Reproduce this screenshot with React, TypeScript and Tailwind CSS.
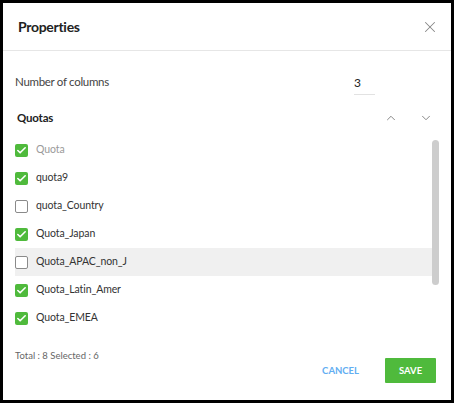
import { X, ChevronUp, ChevronDown, Check } from "lucide-react";

const quotas = [
  { name: "Quota", checked: true, disabled: true },
  { name: "quota9", checked: true },
  { name: "quota_Country", checked: false },
  { name: "Quota_Japan", checked: true },
  { name: "Quota_APAC_non_J", checked: false, hover: true },
  { name: "Quota_Latin_Amer", checked: true },
  { name: "Quota_EMEA", checked: true },
];

function Box({ checked }: { checked: boolean }) {
  return checked ? (
    <span className="w-[13px] h-[13px] rounded-[2px] bg-[#4fba3c] flex items-center justify-center">
      <Check size={11} strokeWidth={3.5} className="text-white" />
    </span>
  ) : (
    <span className="w-[13px] h-[13px] rounded-[2px] border-[1.5px] border-[#8a8a8a] bg-white" />
  );
}

export default function App() {
  return (
    <div className="w-[454px] h-[403px] border-[3px] border-black bg-white flex flex-col font-['Lato',sans-serif] text-[#333]">
      {/* Header */}
      <div className="h-[48px] shrink-0 flex items-center justify-between pl-[15px] pr-[12px] border-b border-[#e6e6e6]">
        <h1 className="text-[14px] font-bold text-[#222] tracking-[-0.3px]">Properties</h1>
        <X size={18} strokeWidth={1.4} className="text-[#888]" />
      </div>

      {/* Body */}
      <div className="flex flex-col pl-[12px] pr-[12px]">
        <div className="h-[36px] mt-[13px] flex items-center justify-between">
          <span className="text-[11.5px] tracking-[-0.3px] text-[#444]">Number of columns</span>
          <div className="w-[21px] mr-[64px] border-b border-[#e2e2e2] pb-[2px] mt-[4px] text-[12px] text-[#222]">3</div>
        </div>

        <div className="h-[36px] flex items-center justify-between">
          <span className="pl-[2px] text-[11.5px] tracking-[-0.2px] font-bold text-[#222]">Quotas</span>
          <div className="flex items-center gap-[21px] pr-[6px] text-[#888]">
            <ChevronUp size={14} strokeWidth={1.7} />
            <ChevronDown size={14} strokeWidth={1.7} />
          </div>
        </div>

        <div className="flex">
          <div className="flex-1 flex flex-col">
            {quotas.map((q) => (
              <div
                key={q.name}
                className={`h-[28px] flex items-center gap-[8px] ${q.hover ? "bg-[#f0f0f0]" : ""}`}
              >
                <Box checked={q.checked} />
                <span className={`text-[10.5px] tracking-[-0.1px] ${q.disabled ? "text-[#9a9a9a]" : "text-[#333]"}`}>{q.name}</span>
              </div>
            ))}
          </div>
          <div className="w-[7px] flex flex-col pt-[4px]">
            <div className="h-[145px] rounded-full bg-[#cdcdcd]" />
          </div>
        </div>

        {/* Footer */}
        <div className="mt-[17px] flex items-end justify-between">
          <span className="text-[9.5px] text-[#666] mb-[20px]">Total : 8 Selected : 6</span>
          <div className="flex items-center gap-[26px] pr-[3px]">
            <button className="text-[9.5px] font-bold text-[#62aef2]">CANCEL</button>
            <button className="w-[51px] h-[25px] bg-[#4fba3c] text-white text-[9.5px] font-bold rounded-[1px]">SAVE</button>
          </div>
        </div>
      </div>
    </div>
  );
}
